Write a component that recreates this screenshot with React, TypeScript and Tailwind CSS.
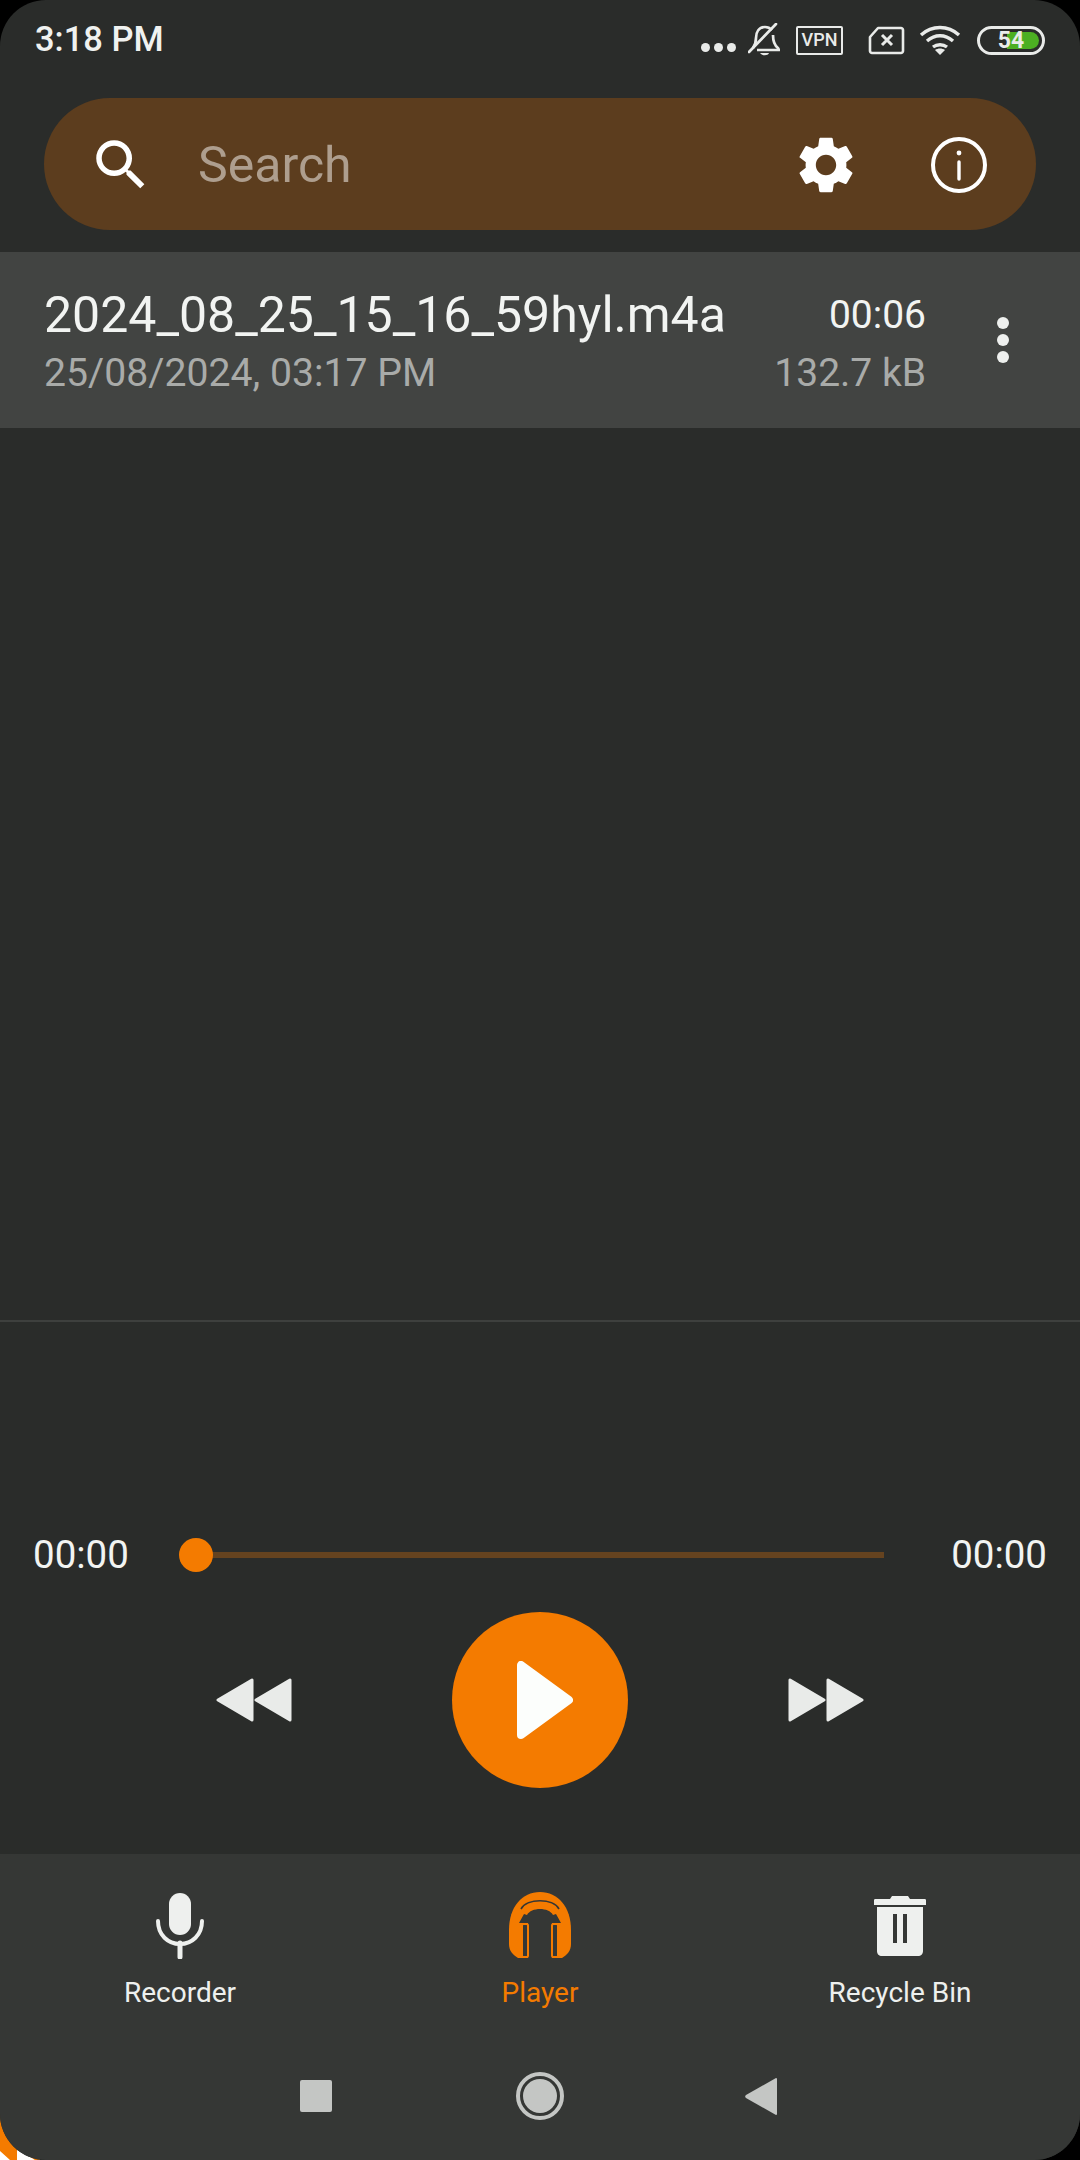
import { MdSearch, MdSettings } from "react-icons/md";

function Bell() {
  return (
    <svg width="32" height="34" viewBox="0 0 32 34" fill="none" stroke="#e9ebe9" strokeWidth="2.7">
      <path d="M5 25c2-3 3-5 3-10 0-6 3-11 9-11 3 0 5 1 7 3M25 12c0 6 1 10 5 13l1 2H9" strokeLinejoin="round" />
      <path d="M1 29 28 1" strokeLinecap="round" />
      <path d="M12 30h9c-1 3-7 3-9 0Z" fill="#e9ebe9" stroke="none" />
    </svg>
  );
}

function Sim() {
  return (
    <svg width="37" height="29" viewBox="0 0 37 29" fill="none" stroke="#e9ebe9" strokeWidth="2.6">
      <path d="M10 2h23c1 0 2 1 2 2v21c0 1-1 2-2 2H4c-1 0-2-1-2-2V11Z" strokeLinejoin="round" />
      <path d="m14 9 10 10M24 9 14 19" strokeWidth="3" />
    </svg>
  );
}

function Wifi() {
  return (
    <svg width="42" height="30" viewBox="0 0 42 30" fill="none" stroke="#e9ebe9" strokeWidth="3.4">
      <path d="M2 10c11-10 27-10 38 0M8 16c8-7 18-7 26 0M14 22c4-3 10-3 14 0" />
      <path d="m21 30-5-5c3-2 7-2 10 0Z" fill="#e9ebe9" stroke="none" />
    </svg>
  );
}

function InfoIcon() {
  return (
    <svg width="56" height="56" viewBox="0 0 56 56" fill="none" stroke="#ffffff">
      <circle cx="28" cy="28" r="26" strokeWidth="4" />
      <path d="M28 25v17" strokeWidth="3.4" strokeLinecap="round" />
      <circle cx="28" cy="16" r="2.4" fill="#ffffff" stroke="none" />
    </svg>
  );
}

function SkipIcon({ flip }: { flip?: boolean }) {
  return (
    <svg width="76" height="44" viewBox="0 0 76 44" className={flip ? "-scale-x-100" : ""} fill="#e9ebe9" stroke="#e9ebe9" strokeWidth="3" strokeLinejoin="round">
      <path d="M36 2v40L2 22Z" />
      <path d="M74 2v40L40 22Z" />
    </svg>
  );
}

function Mic() {
  return (
    <svg width="48" height="66" viewBox="0 0 48 66" fill="none">
      <rect x="13" y="0" width="22" height="42" rx="11" fill="#eef0ee" />
      <path d="M2 28c0 14 10 23 22 23s22-9 22-23" stroke="#eef0ee" strokeWidth="4" strokeLinecap="round" />
      <path d="M24 50v14" stroke="#eef0ee" strokeWidth="5" strokeLinecap="round" />
    </svg>
  );
}

function Headphones() {
  return (
    <svg width="62" height="67" viewBox="0 0 62 67">
      <path fill="#f47b00" d="M0 38C0 15 13 0 31 0s31 15 31 38v14c0 7-4 11-9 14H9C4 63 0 59 0 52Z" />
      <path fill="#353735" d="M19 67V31h-9l5-9 3 1C22 15 40 15 44 23l3-1 5 9h-9v36Z" />
      <path fill="none" stroke="#353735" strokeWidth="1.6" d="M12 17C18 6 44 6 50 17" />
      <rect x="13" y="32" width="6" height="33" rx="1.5" fill="#353735" stroke="#f47b00" strokeWidth="2" />
      <rect x="43" y="32" width="6" height="33" rx="1.5" fill="#353735" stroke="#f47b00" strokeWidth="2" />
    </svg>
  );
}

function Trash() {
  return (
    <svg width="52" height="60" viewBox="0 0 52 60" fill="#eef0ee">
      <path d="M18 0h16l2 3h15c1 0 1 1 1 2v4H0V5c0-1 0-2 1-2h15Z" />
      <path fillRule="evenodd" d="M3 11h46v44c0 3-2 5-5 5H8c-3 0-5-2-5-5Zm16 7v29h4V18Zm10 0v29h4V18Z" />
    </svg>
  );
}

function Tab({ label, active, children }: { label: string; active?: boolean; children: React.ReactNode }) {
  return (
    <div className="flex flex-col items-center">
      <div className="h-[67px] flex items-center">{children}</div>
      <span className={`mt-[16px] text-[28px] leading-[36px] ${active ? "text-[#f47b00]" : "text-[#eef0ee]"}`}>{label}</span>
    </div>
  );
}

export default function App() {
  return (
    <div className="relative w-[1080px] h-[2160px] bg-black overflow-hidden font-['Roboto',sans-serif]">
      {/* corner behind the rounded screen */}
      <svg className="absolute left-0 bottom-0" width="60" height="60" viewBox="0 0 60 60">
        <path d="M0 15h40v45H0Z" fill="#f47b00" />
        <path d="M0 51l10 9H0ZM17 49l18 11H17Z" fill="#ffffff" />
      </svg>

      <div className="relative h-full flex flex-col rounded-[46px] overflow-hidden bg-[#2a2c2a]">
        {/* status bar */}
        <div className="h-[80px] flex items-center pl-[35px] pr-[35px] shrink-0">
          <span className="text-[34.5px] font-medium text-[#f0f2f0]">3:18 PM</span>
          <div className="ml-auto flex items-center">
            <div className="flex gap-[4px] mt-[14px]">
              <span className="w-[9px] h-[9px] rounded-full bg-[#e9ebe9]" />
              <span className="w-[9px] h-[9px] rounded-full bg-[#e9ebe9]" />
              <span className="w-[9px] h-[9px] rounded-full bg-[#e9ebe9]" />
            </div>
            <div className="ml-[12px]"><Bell /></div>
            <div className="ml-[16px] w-[47px] h-[29px] border-[2px] border-[#e9ebe9] rounded-[2px] flex items-center justify-center text-[18px] font-medium leading-none text-[#e9ebe9]">VPN</div>
            <div className="ml-[25px]"><Sim /></div>
            <div className="ml-[14px]"><Wifi /></div>
            <div className="relative ml-[16px] w-[68px] h-[29px] border-[3px] border-[#e9ebe9] rounded-full p-[3px] flex">
              <div className="ml-auto w-[32px] h-full bg-[#4caf22] rounded-r-full" />
              <span className="absolute inset-0 flex items-center justify-center text-[23px] font-bold leading-none text-[#e9ebe9]">54</span>
            </div>
          </div>
        </div>

        {/* search bar */}
        <div className="mx-[44px] mt-[18px] h-[132px] shrink-0 rounded-[66px] bg-[#5c3d1e] flex items-center">
          <MdSearch className="ml-[44px] mt-[2px] text-white" size={66} />
          <span className="ml-[44px] mt-[2px] text-[50px] text-[#ae9e8e]">Search</span>
          <MdSettings className="ml-auto mt-[2px] text-white" size={68} />
          <div className="ml-[71px] mr-[49px] mt-[2px]"><InfoIcon /></div>
        </div>

        {/* recording row */}
        <div className="mt-[22px] h-[176px] shrink-0 bg-[#424442] flex items-center pl-[44px]">
          <div className="flex-1 min-w-0 pt-[4px]">
            <div className="text-[50px] leading-[58px] -mt-[1px] text-[#f2f4f2]">2024_08_25_15_16_59hyl.m4a</div>
            <div className="text-[39.2px] leading-[50px] mt-[4px] text-[#a9aba9]">25/08/2024, 03:17 PM</div>
          </div>
          <div className="text-right mr-[71px] pt-[4px]">
            <div className="text-[39px] leading-[58px] -mt-[1px] text-[#f2f4f2]">00:06</div>
            <div className="text-[39px] leading-[50px] mt-[4px] text-[#a9aba9]">132.7 kB</div>
          </div>
          <div className="mr-[71px] flex flex-col gap-[5px]">
            <span className="w-[12px] h-[12px] rounded-full bg-[#eef0ee]" />
            <span className="w-[12px] h-[12px] rounded-full bg-[#eef0ee]" />
            <span className="w-[12px] h-[12px] rounded-full bg-[#eef0ee]" />
          </div>
        </div>

        {/* empty list */}
        <div className="flex-1 border-b-2 border-[#3e403e]" />

        {/* player */}
        <div className="h-[532px] shrink-0 flex flex-col">
          <div className="mt-[208px] h-[50px] flex items-center px-[33px] text-[38.5px] text-[#f2f4f2]">
            <span>00:00</span>
            <div className="relative flex-1 mr-[67px] h-[6px] bg-[#65431f] ml-[67px]">
              <span className="absolute left-[-17px] top-[-14px] w-[34px] h-[34px] rounded-full bg-[#f47b00]" />
            </div>
            <span>00:00</span>
          </div>
          <div className="mt-[32px] flex items-center justify-center">
            <SkipIcon />
            <div className="mx-[160px] w-[176px] h-[176px] rounded-full bg-[#f47b00] flex items-center justify-center">
              <svg className="ml-[10px]" width="56" height="78" viewBox="0 0 56 78" fill="#fcfefc" stroke="#fcfefc" strokeWidth="8" strokeLinejoin="round">
                <path d="M4 4v70l48-35Z" />
              </svg>
            </div>
            <SkipIcon flip />
          </div>
        </div>

        {/* bottom tabs + system nav */}
        <div className="h-[306px] shrink-0 bg-[#353735] flex flex-col">
          <div className="mt-[38px] grid grid-cols-3">
            <Tab label="Recorder"><Mic /></Tab>
            <Tab label="Player" active><Headphones /></Tab>
            <Tab label="Recycle Bin"><Trash /></Tab>
          </div>
          <div className="mt-[61px] pr-[3px] flex items-center justify-center">
            <span className="w-[32px] h-[32px] rounded-[2px] bg-[#c4c6c4]" />
            <div className="mx-[184px] w-[48px] h-[48px] rounded-full border-[4px] border-[#c4c6c4] flex items-center justify-center">
              <span className="w-[34px] h-[34px] rounded-full bg-[#c4c6c4]" />
            </div>
            <svg className="-ml-[3px]" width="32" height="37" viewBox="0 0 32 37" fill="#c4c6c4">
              <path d="M31 0a1 1 0 0 1 1 1v35a1 1 0 0 1-1 1L1 20a2 2 0 0 1 0-3Z" />
            </svg>
          </div>
        </div>
      </div>
    </div>
  );
}
